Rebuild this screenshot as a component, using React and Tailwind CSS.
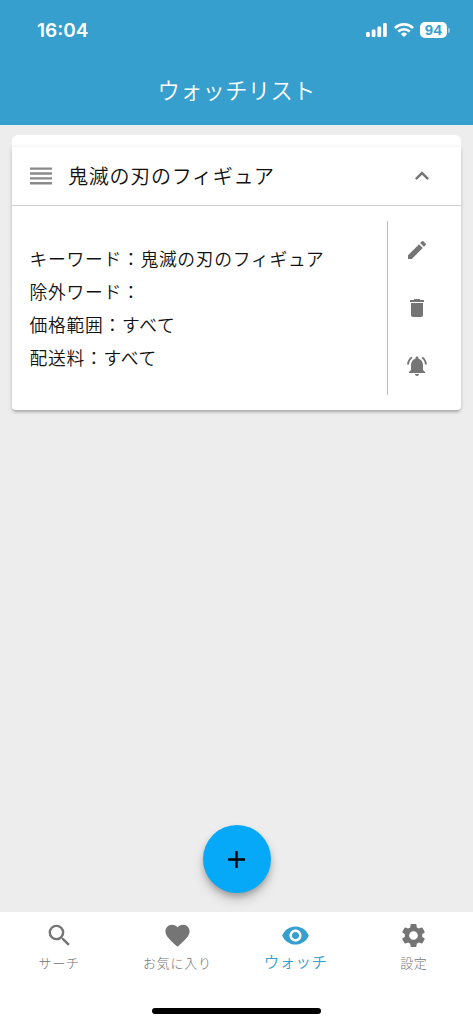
import React from 'react';
import {
  MdAdd,
  MdDelete,
  MdEdit,
  MdExpandLess,
  MdFavorite,
  MdNotificationsActive,
  MdSearch,
  MdSettings,
  MdVisibility,
} from 'react-icons/md';

const StatusBar = () => (
  <div className="flex h-[60px] items-center justify-between pl-[37px] pr-[23px] font-['Inter','Liberation_Sans',sans-serif] text-white">
    <span className="mt-[1px] text-[19px] font-semibold leading-6">16:04</span>
    <div className="flex items-center">
      <svg className="h-[14px] w-[21px]" viewBox="0 0 21 14" fill="currentColor">
        <rect x="0" y="9" width="3.8" height="5" rx="1.2" />
        <rect x="5.7" y="6.5" width="3.8" height="7.5" rx="1.2" />
        <rect x="11.4" y="3.5" width="3.8" height="10.5" rx="1.2" />
        <rect x="17" y="0" width="3.8" height="14" rx="1.2" />
      </svg>
      <svg
        className="ml-[7px] h-[14px] w-5"
        viewBox="0 0 20 14"
        fill="none"
        stroke="currentColor"
        strokeWidth="2.6"
      >
        <path d="M0.9 5.1a13 13 0 0 1 18.2 0" />
        <path d="M4.2 8.5a8.4 8.4 0 0 1 11.6 0" />
        <path
          d="M10 14L6.9 10.9a4.5 4.5 0 0 1 6.2 0z"
          fill="currentColor"
          stroke="none"
        />
      </svg>
      <div className="ml-[6px] flex h-4 w-[27px] items-center justify-center rounded-[5px] bg-white font-['Liberation_Sans',sans-serif] text-[15px] font-bold tracking-[0.5px] text-[#369fce]">
        94
      </div>
      <div className="ml-[1px] h-[5px] w-[2px] rounded-r-full bg-white/50" />
    </div>
  </div>
);

const DragHandle = () => (
  <svg
    className="h-[18px] w-[22px] text-[#8a8a8a]"
    viewBox="0 0 22 18"
    stroke="currentColor"
    strokeWidth="2.4"
  >
    <path d="M0 1.6H22M0 6.5H22M0 11.4H22M0 16.3H22" />
  </svg>
);

const DetailRow = ({ label, value }) => (
  <p className="leading-[33px]">
    {label}：{value}
  </p>
);

const WatchCard = () => (
  <div className="mx-3 mt-[10px]">
    <div className="h-3 rounded-t-[6px] bg-white" />
    <div className="rounded-b-[4px] bg-white shadow-[0_3px_3px_-1px_rgba(0,0,0,0.22),0_1px_5px_rgba(0,0,0,0.14)]">
      <div className="flex h-[59px] items-center border-b border-[#d0d0d0] pl-[18px] pr-[25px]">
        <DragHandle />
        <h2 className="ml-4 flex-1 text-[20px] tracking-[0.75px]">
          鬼滅の刃のフィギュア
        </h2>
        <MdExpandLess className="size-7 text-[#757575]" />
      </div>
      <div className="flex h-[204px] py-[15px]">
        <div className="flex-1 pl-[17.5px] pt-[21px] text-[17.8px] tracking-[0.7px]">
          <DetailRow label="キーワード" value="鬼滅の刃のフィギュア" />
          <DetailRow label="除外ワード" value="" />
          <DetailRow label="価格範囲" value="すべて" />
          <DetailRow label="配送料" value="すべて" />
        </div>
        <div className="flex w-[74px] flex-col items-center gap-[34px] border-l border-[#bdbdbd] pr-[15px] pt-[17px] text-2xl text-[#757575]">
          <MdEdit />
          <MdDelete />
          <MdNotificationsActive />
        </div>
      </div>
    </div>
  </div>
);

const Tab = ({ icon: Icon, label, active }) => (
  <div
    className={`flex flex-1 flex-col items-center pt-[9px] ${
      active ? 'text-[#369fce]' : 'text-[#757575]'
    }`}
  >
    <Icon className="size-[29px]" />
    <span
      className={
        active
          ? '-mt-[1px] text-[15.5px] leading-6 tracking-[0.4px]'
          : 'mt-[1px] text-[13px] font-light leading-6 tracking-[0.7px]'
      }
    >
      {label}
    </span>
  </div>
);

const App = () => (
  <div className="flex h-screen flex-col bg-[#ededed] font-['Noto_Sans_CJK_JP',sans-serif] font-[350] text-[#111]">
    <header className="h-[125px] bg-[#369fce]">
      <StatusBar />
      <h1 className="text-center text-[22.3px] leading-[58px] tracking-[0.3px] text-white">
        ウォッチリスト
      </h1>
    </header>
    <main className="flex flex-1 flex-col justify-between">
      <WatchCard />
      <button className="mb-[19px] flex size-[68px] items-center justify-center self-center rounded-full bg-[#05a9f7] text-black shadow-[0_4px_6px_-1px_rgba(0,0,0,0.25),0_7px_12px_rgba(0,0,0,0.15)]">
        <MdAdd className="size-[29px]" />
      </button>
    </main>
    <nav className="flex h-[112px] flex-col items-center bg-white">
      <div className="flex w-full flex-1">
        <Tab icon={MdSearch} label="サーチ" />
        <Tab icon={MdFavorite} label="お気に入り" />
        <Tab icon={MdVisibility} label="ウォッチ" active />
        <Tab icon={MdSettings} label="設定" />
      </div>
      <div className="mb-[10px] h-[6px] w-[169px] rounded-full bg-black" />
    </nav>
  </div>
);

export default App;
